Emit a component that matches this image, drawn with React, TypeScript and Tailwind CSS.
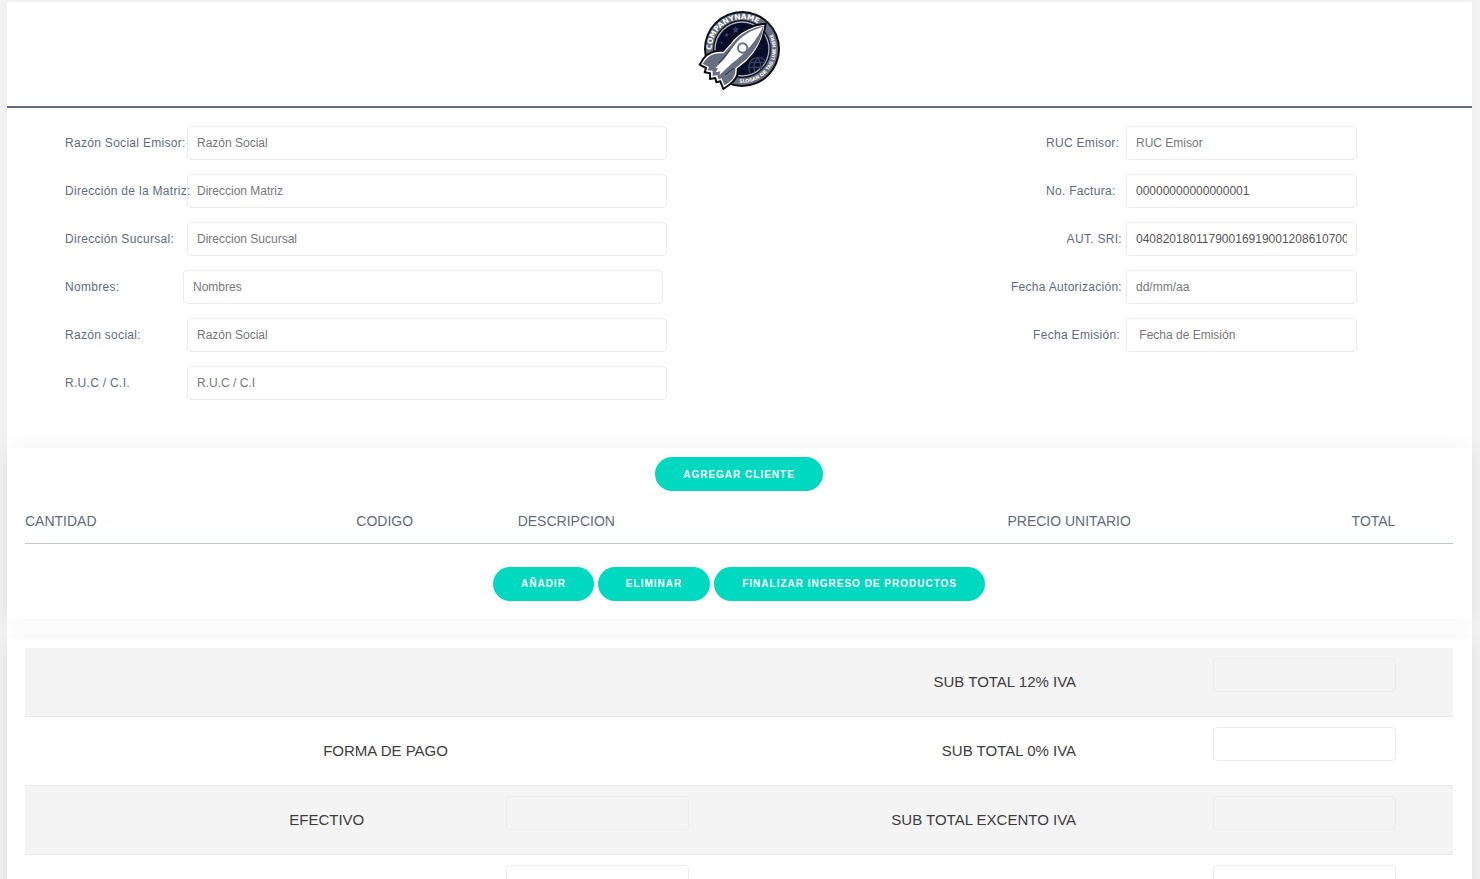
import React from 'react';

type FieldProps = {
  id: string;
  label: string;
  placeholder?: string;
  value?: string;
  labelClass: string;
  inputClass: string;
};

const inputBase =
  'h-[34px] rounded border border-[#ececec] px-[9px] text-xs text-[#555555] placeholder:text-[#777777] placeholder:opacity-100 outline-none focus:border-[#00d8c0]';

function Field({ id, label, placeholder, value, labelClass, inputClass }: FieldProps) {
  return (
    <div className="flex items-center">
      <label htmlFor={id} className={`shrink-0 whitespace-nowrap text-xs tracking-wide text-[#606c7c] ${labelClass}`}>
        {label}
      </label>
      <input
        id={id}
        type="text"
        placeholder={placeholder}
        defaultValue={value}
        className={`bg-transparent ${inputBase} ${inputClass}`}
      />
    </div>
  );
}

const issuerFields = [
  { id: 'razon-emisor', label: 'Razón Social Emisor:', placeholder: 'Razón Social' },
  { id: 'dir-matriz', label: 'Dirección de la Matriz:', placeholder: 'Direccion Matriz' },
  { id: 'dir-sucursal', label: 'Dirección Sucursal:', placeholder: 'Direccion Sucursal' },
  { id: 'nombres', label: 'Nombres:', placeholder: 'Nombres', labelClass: 'w-[118px]' },
  { id: 'razon-social', label: 'Razón social:', placeholder: 'Razón Social' },
  { id: 'ruc-ci', label: 'R.U.C / C.I.', placeholder: 'R.U.C / C.I' },
];

const invoiceFields = [
  { id: 'ruc-emisor', label: 'RUC Emisor:', placeholder: 'RUC Emisor', labelClass: 'w-20' },
  { id: 'factura', label: 'No. Factura:', value: '00000000000000001', labelClass: 'w-20' },
  { id: 'aut-sri', label: 'AUT. SRI:', value: '04082018011790016919001208610700', labelClass: 'pr-1' },
  { id: 'fecha-aut', label: 'Fecha Autorización:', placeholder: 'dd/mm/aa', labelClass: 'pr-1' },
  { id: 'fecha-emi', label: 'Fecha Emisión:', placeholder: '\u00a0Fecha de Emisión', labelClass: 'pr-1.5' },
];

function PillButton({ children }: { children: React.ReactNode }) {
  return (
    <button
      type="button"
      className="h-[34px] rounded-full bg-[#00d8c0] px-7 text-[10px] font-bold uppercase tracking-[1px] text-white hover:bg-[#00c4ae]"
    >
      {children}
    </button>
  );
}

function Logo() {
  return (
    <svg viewBox="24 30 252 243" className="h-[81px] w-[84px]" role="img" aria-label="COMPANYNAME">
      <defs>
        <path id="name-arc" d="M65 150 A91 91 0 0 1 247 147" />
        <path id="slogan-arc" d="M148 248 A101 101 0 0 0 232 80" />
      </defs>
      <circle cx="156" cy="147" r="114" fill="#0b0e16" />
      <circle cx="156" cy="147" r="108" fill="#667080" />
      <circle cx="156" cy="147" r="87" fill="#0b0e16" />
      <circle cx="156" cy="147" r="83" fill="#aab1bc" />
      <circle cx="156" cy="147" r="79" fill="#080d2c" />
      <g fill="#39425f">
        <path d="M137 78l3 7 8 1-6 5 2 8-7-4-7 4 2-8-6-5 8-1z" />
        <path d="M165 85l2 4 5 1-4 3 1 5-4-3-4 3 1-5-4-3 5-1z" />
        <path d="M110 98l2 4 5 1-4 3 1 5-4-3-4 3 1-5-4-3 5-1z" />
        <circle cx="95" cy="128" r="3" />
        <circle cx="210" cy="145" r="2" />
      </g>
      <g fill="none" stroke="#39425f" strokeWidth="4">
        <path d="M180 218 C171 195 182 173 204 173 C215 173 223 178 226 185" />
        <path d="M177 202 H220 M183 187 H224 M203 174 C191 188 190 205 195 217 M204 174 C213 188 214 200 211 210" />
      </g>
      <text fontFamily="DejaVu Sans, Liberation Sans, sans-serif" fontWeight="700" fontSize="22" fill="#ffffff">
        <textPath href="#name-arc">COMPANYNAME</textPath>
      </text>
      <text fontFamily="DejaVu Sans, Liberation Sans, sans-serif" fontWeight="700" fontSize="14" fill="#ffffff">
        <textPath href="#slogan-arc">SLOGAN OR TAG LINE HERE</textPath>
      </text>
      <path
        d="M227 71 C190 74 147 92 119 130 L98 153 C73 150 50 162 41 175 L29 194 L48 204 L44 217 L60 220 L60 237 L76 234 L79 247 L91 244 L100 267 L117 255 C137 241 145 224 143 208 L170 186 C206 153 222 111 227 71Z"
        fill="#ffffff"
        stroke="#0b0e16"
        strokeWidth="6"
        strokeLinejoin="round"
      />
      <path
        d="M221 77 C188 82 150 99 124 134 L101 160 C77 157 57 166 47 179 L38 191 L57 201 L53 211 L68 212 L68 228 L82 225 L86 238 L95 235 L103 256 C126 245 138 228 136 205 L166 180 C199 150 216 113 221 77Z"
        fill="#667080"
      />
      <path
        d="M219 80 C184 91 154 105 130 140 L102 178 L76 204 L84 204 L77 217 L91 214 L88 226 L126 190 C164 162 199 124 219 80Z"
        fill="#ffffff"
      />
      <path d="M119 151 L86 190 M132 205 L105 224" fill="none" stroke="#0b0e16" strokeWidth="2" />
      <circle cx="158" cy="144" r="14" fill="#ffffff" stroke="#667080" strokeWidth="6" />
    </svg>
  );
}

function AmountInput({ label }: { label?: string }) {
  return <input type="text" aria-label={label} className={`mt-[10px] w-[183px] bg-transparent ${inputBase}`} />;
}

const columns = ['CANTIDAD', 'CODIGO', 'DESCRIPCION', 'PRECIO UNITARIO', 'TOTAL'];

type TotalRow = { id: string; payment?: string; heading?: string; total?: string };

const totals: TotalRow[] = [
  { id: 'iva12', heading: '', total: 'SUB TOTAL 12% IVA' },
  { id: 'iva0', heading: 'FORMA DE PAGO', total: 'SUB TOTAL 0% IVA' },
  { id: 'excento', payment: 'EFECTIVO', total: 'SUB TOTAL EXCENTO IVA' },
  { id: 'otros' },
];

const cardClass = 'relative bg-white pl-[18px] pr-[19px] pt-[9px] shadow-[0_0_20px_rgba(0,0,0,0.06)]';

export default function App() {
  return (
    <div className="h-screen overflow-hidden bg-[#f4f4f4] pl-[7px] pr-2 pt-0.5 font-['Liberation_Sans',Arial,sans-serif]">
      <main className="min-h-full bg-white shadow-[0_0_20px_rgba(0,0,0,0.04)]">
        <header className="flex h-[106px] justify-center border-b-2 border-[#606c7c] pt-2">
          <Logo />
        </header>

        <form className="flex items-start justify-between pb-12 pl-[58px] pr-[115px] pt-[18px]">
          <div className="flex flex-col gap-[14px]">
            {issuerFields.map((f) => (
              <Field key={f.id} {...f} labelClass={f.labelClass ?? 'w-[122px]'} inputClass="w-[480px]" />
            ))}
          </div>
          <div className="flex flex-col items-end gap-[14px]">
            {invoiceFields.map((f) => (
              <Field key={f.id} {...f} inputClass="w-[231px]" />
            ))}
          </div>
        </form>

        <section className={`${cardClass} pb-[18px]`}>
          <div className="flex justify-center">
            <PillButton>Agregar cliente</PillButton>
          </div>
          <table className="mt-2 w-full table-fixed text-sm text-[#606c7c]">
            <colgroup>
              <col className="w-[23.2%]" />
              <col className="w-[11.3%]" />
              <col className="w-[34.3%]" />
              <col className="w-[24.1%]" />
              <col />
            </colgroup>
            <thead>
              <tr className="border-b border-[#bcc6d0]">
                {columns.map((c) => (
                  <th key={c} scope="col" className="h-11 whitespace-nowrap text-left font-normal">
                    {c}
                  </th>
                ))}
              </tr>
            </thead>
          </table>
          <div className="mt-[23px] flex justify-center gap-1">
            <PillButton>Añadir</PillButton>
            <PillButton>Eliminar</PillButton>
            <PillButton>Finalizar ingreso de productos</PillButton>
          </div>
        </section>

        <section className={`${cardClass} mt-5`}>
          <table className="w-full table-fixed text-[15px] text-[#3c3c3c]">
            <colgroup>
              <col className="w-[33.7%]" />
              <col className="w-[16.8%]" />
              <col className="w-[32.7%]" />
              <col />
            </colgroup>
            <tbody>
              {totals.map((row) => (
                <tr key={row.id} className="h-[69px] border-b border-[#e8e8e8] odd:bg-[#f4f4f4]">
                  {row.heading !== undefined ? (
                    <td colSpan={2} className="text-center">
                      {row.heading}
                    </td>
                  ) : (
                    <>
                      <td className="pr-[142px] text-right">{row.payment}</td>
                      <td className="align-top">
                        <AmountInput label={row.payment} />
                      </td>
                    </>
                  )}
                  <td className="whitespace-nowrap pr-[137px] text-right">{row.total}</td>
                  <td className="align-top">
                    <AmountInput label={row.total} />
                  </td>
                </tr>
              ))}
            </tbody>
          </table>
        </section>
      </main>
    </div>
  );
}
